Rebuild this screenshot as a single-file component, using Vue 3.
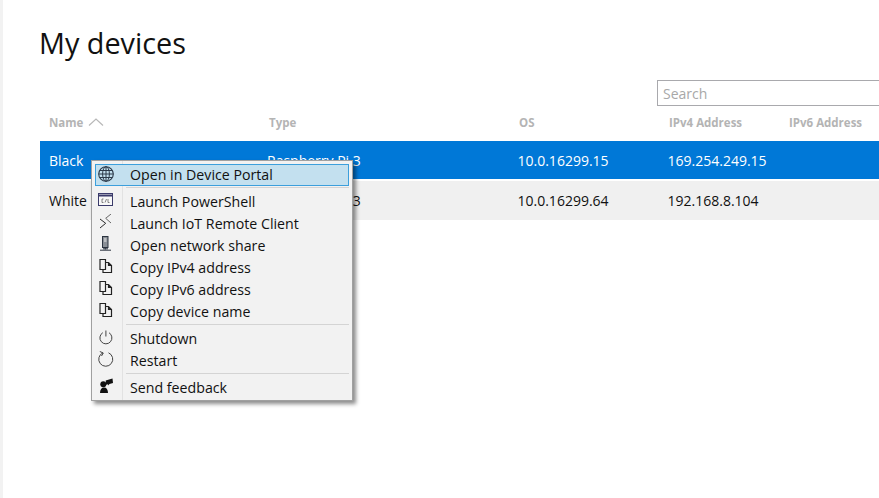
<template>
  <div class="page">
    <main class="content">
      <h1 class="title">My devices</h1>
      <div class="search-row"><div class="search">Search</div></div>
      <div class="grid head">
        <div class="name-head">Name <svg width="16" height="8" viewBox="0 0 16 8"><path d="M1 7.500 8 1l7 6.500" fill="none" stroke="#b8b8b8" stroke-width="1.200"/></svg></div>
        <div>Type</div><div>OS</div><div>IPv4 Address</div><div>IPv6 Address</div>
      </div>
      <div v-for="(r, i) in rows" :key="r.name" class="grid row" :class="i === 0 ? 'sel' : 'alt'">
        <div>{{ r.name }}</div><div>Raspberry Pi 3</div><div>{{ r.os }}</div><div>{{ r.ip }}</div><div></div>
      </div>
    </main>

    <div class="menu">
      <template v-for="(g, gi) in groups" :key="gi">
        <div v-if="gi" class="sep" :class="{ first: gi === 1 }"></div>
        <div v-for="item in g" :key="item.label" class="item" :class="{ hot: item.hot }">
          <span class="ico">
            <svg width="18" height="18" viewBox="0 0 18 18" fill="none" stroke="#333" stroke-width="1">
              <template v-if="item.icon === 'globe'">
                <circle cx="9" cy="9" r="7.300" stroke="#2c3a4a" stroke-width="1.100"/><ellipse cx="9" cy="9" rx="3.400" ry="7.300" stroke="#2c3a4a"/><path d="M1.700 9h14.600M2.700 5.500h12.600M2.700 12.500h12.600M9 1.700v14.600" stroke="#2c3a4a"/>
              </template>
              <template v-else-if="item.icon === 'ps'">
                <rect x="1.500" y="1.500" width="14" height="12" stroke="#3b3b6b" fill="#f8f8f8"/><path d="M2 3.500h13" stroke="#3b3b6b" stroke-width="2"/><path d="M6.500 7H5v3.500h1.500M8 10.500l1.500-3.500M11 7v3.500h1.500" stroke="#666" stroke-width=".8"/>
              </template>
              <template v-else-if="item.icon === 'remote'">
                <path d="M3 5l5.700 4.300L3 14" stroke="#2a2a2a"/><path d="M14 0 8.700 4.300 14 9" stroke="#666"/>
              </template>
              <template v-else-if="item.icon === 'share'">
                <rect x="5.500" y=".5" width="5.500" height="11" fill="#8a8f96" stroke="#2c3440"/><path d="M7 3h2.500M7 5h2.500" stroke="#eee"/><path d="M8.300 11.500v2" stroke="#2c3440"/><path d="M3 14.200h11M6 12.800h5" stroke="#2c3440"/>
              </template>
              <template v-else-if="item.icon === 'copy'">
                <path d="M3 1.500h5.500v10H3zM8.500 4.500h3l3 3v7h-8.500v-3M11.500 4.500v3h3" stroke="#222" stroke-width="1.200"/>
              </template>
              <template v-else-if="item.icon === 'power'">
                <path d="M5.800 3.700a6 6 0 1 0 6.200 0" stroke="#444"/><path d="M8.900 1.500v6" stroke="#444"/>
              </template>
              <template v-else-if="item.icon === 'restart'">
                <path d="M6 1.800a7 7 0 1 0 5.500 0" stroke="#444"/><path d="M2.800 0.500 6.300 2 4.500 5" stroke="#444"/>
              </template>
              <template v-else>
                <circle cx="6.300" cy="6.300" r="3" fill="#111" stroke="none"/><path d="M3 15c0-3.500 1.500-5.500 4-5.500s4 2 4 5.500z" fill="#111" stroke="none"/><path d="M8.700 2.500 15.500.5 16 5l-3.500 1-1.500 1.500-.2-1.200-1.800.4z" fill="#111" stroke="none"/>
              </template>
            </svg>
          </span>
          <span class="label">{{ item.label }}</span>
        </div>
      </template>
    </div>
  </div>
</template>

<script setup>
const rows = [
  { name: 'Black', os: '10.0.16299.15', ip: '169.254.249.15' },
  { name: 'White', os: '10.0.16299.64', ip: '192.168.8.104' }
]
const groups = [
  [{ label: 'Open in Device Portal', icon: 'globe', hot: true }],
  [
    { label: 'Launch PowerShell', icon: 'ps' },
    { label: 'Launch IoT Remote Client', icon: 'remote' },
    { label: 'Open network share', icon: 'share' },
    { label: 'Copy IPv4 address', icon: 'copy' },
    { label: 'Copy IPv6 address', icon: 'copy' },
    { label: 'Copy device name', icon: 'copy' }
  ],
  [
    { label: 'Shutdown', icon: 'power' },
    { label: 'Restart', icon: 'restart' }
  ],
  [{ label: 'Send feedback', icon: 'feedback' }]
]
</script>

<style>
html, body { margin: 0; background: #fff; overflow: hidden; }
</style>

<style scoped>
.page {
  position: relative;
  width: 879px;
  height: 498px;
  overflow: hidden;
  box-sizing: border-box;
  border-left: 3px solid #f2f2f2;
  font-family: "Open Sans", "Noto Sans", sans-serif;
}
.content { padding-left: 37px; }
.title {
  margin: 0 0 0 -1px;
  padding-top: 23px;
  height: 57px;
  font-size: 28.8px;
  line-height: 40px;
  font-weight: 400;
  color: #111;
}
.search-row { padding-left: 617px; height: 26px; }
.search {
  box-sizing: border-box;
  width: 240px;
  height: 26px;
  border: 1px solid #a9a9ad;
  border-right: 0;
  padding-left: 5px;
  font-size: 14px;
  line-height: 26px;
  color: #a8a8a8;
}
.grid {
  display: grid;
  align-items: center;
  white-space: nowrap;
}
.head {
  height: 32px;
  padding: 0 0 3px 9px;
  font-size: 11.5px;
  font-weight: 700;
  color: #b4b4b4;
  grid-template-columns: 220px 250px 150px 120px 1fr;
}
.name-head { display: flex; align-items: center; gap: 5px; }
.row {
  font-size: 14px;
  padding-left: 9px;
  color: #111;
  grid-template-columns: 218px 250.500px 150px 120px 1fr;
}
.sel { height: 38px; background: #0078d7; color: #fff; }
.alt { height: 39px; margin-top: 2px; background: #f0f0f0; }
.menu {
  position: absolute;
  left: 88px;
  top: 160px;
  width: 262px;
  box-sizing: border-box;
  padding: 3px 3px 2px;
  background: #f2f2f2;
  border: 1px solid #a0a0a0;
  box-shadow: 3px 3px 4px rgba(0, 0, 0, .45);
  background-image: linear-gradient(#e2e2e2, #e2e2e2);
  background-size: 1px 100%;
  background-position: 30px 0;
  background-repeat: no-repeat;
}
.item {
  display: flex;
  align-items: center;
  height: 22px;
  box-sizing: border-box;
  font-size: 14.2px;
  color: #111;
}
.hot {
  background: #c3e0ef;
  outline: 1px solid #3c9fdc;
  outline-offset: -1px;
  padding-bottom: 2px;
}
.ico { width: 34px; padding-left: 2px; box-sizing: border-box; display: flex; flex: none; }
.label { padding-left: 1px; }
.sep { height: 1px; margin: 2px 0 2px 31px; background: #d4d4d4; }
.sep.first { margin-top: 1px; }
</style>
